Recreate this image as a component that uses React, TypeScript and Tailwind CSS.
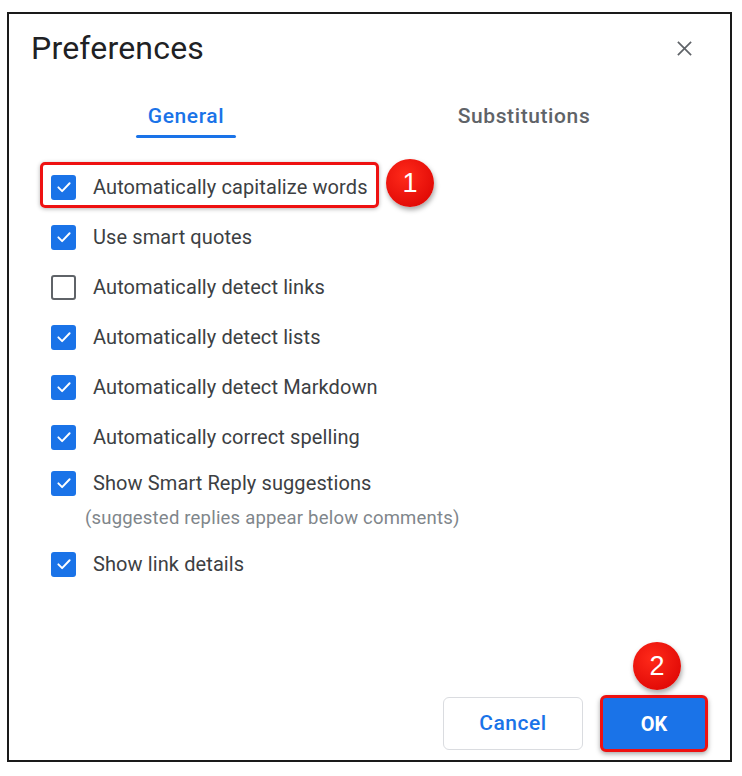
import { useState } from "react";

const options = [
  { label: "Automatically capitalize words", checked: true },
  { label: "Use smart quotes", checked: true },
  { label: "Automatically detect links", checked: false },
  { label: "Automatically detect lists", checked: true },
  { label: "Automatically detect Markdown", checked: true },
  { label: "Automatically correct spelling", checked: true },
];

function Checkbox({ checked }: { checked: boolean }) {
  if (!checked) {
    return <div className="w-[25px] h-[25px] rounded-[3px] border-[2.5px] border-[#5f6368] bg-white shrink-0" />;
  }
  return (
    <div className="w-[25px] h-[25px] rounded-[3px] bg-[#1a73e8] flex items-center justify-center shrink-0">
      <svg width="18" height="18" viewBox="0 0 24 24" fill="none">
        <path d="M4.5 12.5l5 5L19.5 7" stroke="white" strokeWidth="2.6" strokeLinecap="round" strokeLinejoin="round" />
      </svg>
    </div>
  );
}

function Badge({ n }: { n: string }) {
  return (
    <div className="w-12 h-12 rounded-full bg-[radial-gradient(circle_at_40%_35%,#ff2a1a,#d80000)] shadow-[1px_3px_5px_rgba(0,0,0,0.35)] flex items-center justify-center text-white text-[27px] font-['Liberation_Sans',Arial,sans-serif]">
      {n}
    </div>
  );
}

function Row({ label, checked }: { label: string; checked: boolean }) {
  return (
    <div className="h-[50px] flex items-center pl-[42px]">
      <Checkbox checked={checked} />
      <span className="ml-[17px] text-[20px] tracking-[0.1px] text-[#3c4043]">{label}</span>
    </div>
  );
}

export default function App() {
  const [tab, setTab] = useState<"general" | "subs">("general");

  return (
    <div className="w-[742px] h-[776px] bg-white pl-[7px] pt-[12px] font-['Roboto',sans-serif]">
      <div className="relative w-[725px] h-[750px] border-2 border-[#1a1a1a] flex flex-col">
        {/* Header */}
        <div className="flex items-center justify-between pl-[22px] pr-[37px] pt-[16px] h-[52px]">
          <h1 className="text-[32px] tracking-[0.2px] text-[#202124] leading-none">Preferences</h1>
          <svg width="17" height="17" viewBox="0 0 18 18">
            <path d="M2 2L16 16M16 2L2 16" stroke="#5f6368" strokeWidth="1.8" />
          </svg>
        </div>

        {/* Tabs */}
        <div className="flex ml-[8px] w-[676px] mt-[38px]">
          <button onClick={() => setTab("general")} className="flex-1 flex justify-center">
            <span className={`flex flex-col items-center text-[21px] tracking-[0.6px] font-medium ${tab === "general" ? "text-[#1a73e8]" : "text-[#5f6368]"}`}>
              <span className="leading-[24px]">General</span>
              <span className={`mt-[7px] h-[3px] w-[100px] rounded-full ${tab === "general" ? "bg-[#1a73e8]" : "bg-transparent"}`} />
            </span>
          </button>
          <button onClick={() => setTab("subs")} className="flex-1 flex justify-center">
            <span className={`flex flex-col items-center text-[21px] tracking-[0.6px] font-medium ${tab === "subs" ? "text-[#1a73e8]" : "text-[#5f6368]"}`}>
              <span className="leading-[24px]">Substitutions</span>
              <span className={`mt-[7px] h-[3px] w-[130px] rounded-full ${tab === "subs" ? "bg-[#1a73e8]" : "bg-transparent"}`} />
            </span>
          </button>
        </div>

        {/* Options */}
        <div className="mt-[24px] flex flex-col">
          <div className="relative">
            <Row {...options[0]} />
            <div className="absolute left-[31px] top-0 w-[339px] h-[46px] border-[3px] border-[#ee1111] rounded-[5px] shadow-[0_1px_4px_rgba(0,0,0,0.3)]" />
            <div className="absolute left-[377px] top-[-3px]">
              <Badge n="1" />
            </div>
          </div>
          {options.slice(1).map((o) => (
            <Row key={o.label} {...o} />
          ))}
          <div className="h-[44px] flex items-center pl-[42px] -mt-px">
            <Checkbox checked />
            <span className="ml-[17px] text-[20px] tracking-[0.1px] text-[#3c4043]">Show Smart Reply suggestions</span>
          </div>
          <div className="h-[28px] flex items-center pl-[76px] text-[18.5px] tracking-[0.2px] text-[#80868b]">
            (suggested replies appear below comments)
          </div>
          <div className="mt-[6px]">
            <Row label="Show link details" checked />
          </div>
        </div>

        {/* Footer */}
        <div className="mt-auto flex justify-end items-end gap-[17px] pr-[22px] pb-[8px]">
          <button className="w-[140px] h-[53px] mb-[2px] rounded-[6px] border border-[#dadce0] bg-white text-[#1a73e8] text-[21px] tracking-[0.5px] font-medium">
            Cancel
          </button>
          <div className="relative">
            <div className="absolute left-[33px] top-[-53px]">
              <Badge n="2" />
            </div>
            <button className="w-[108px] h-[57px] rounded-[6px] border-[3px] border-[#ee1111] bg-[#1a73e8] text-white text-[20px] font-bold shadow-[0_2px_5px_rgba(0,0,0,0.35)]">
              OK
            </button>
          </div>
        </div>
      </div>
    </div>
  );
}
